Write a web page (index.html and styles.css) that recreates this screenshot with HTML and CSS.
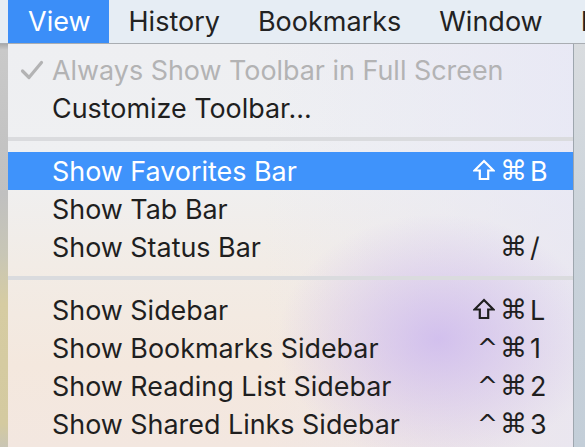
FILE: index.html
```html
<!DOCTYPE html>
<html lang="en">
<head>
    <meta charset="utf-8" />
    <meta name="viewport" content="width=device-width, initial-scale=1.0">
    <title>View menu</title>
    <link rel="stylesheet" href="styles.css">
</head>
<body>
    <div class="menubar">
        <span class="bar-item active">View</span>
        <span class="bar-item">History</span>
        <span class="bar-item">Bookmarks</span>
        <span class="bar-item">Window</span>
        <span class="bar-item">Help</span>
    </div>
    <div class="desk">
        <div class="desk-left"></div>
        <div class="menu">
            <div class="item disabled">
                <span class="check">
                    <svg width="24" height="20" viewBox="0 0 24 20"><path d="M2.5 11 L9 17.5 L21.5 2.5" fill="none" stroke="currentColor" stroke-width="3.2" stroke-linecap="round" stroke-linejoin="round"/></svg>
                </span>
                <span class="label">Always Show Toolbar in Full Screen</span>
            </div>
            <div class="item">
                <span class="check"></span>
                <span class="label">Customize Toolbar…</span>
            </div>
            <div class="sep"></div>
            <div class="item selected">
                <span class="check"></span>
                <span class="label">Show Favorites Bar</span>
                <span class="mods">
                    <svg class="shift" width="22" height="22" viewBox="0 0 22 22"><path d="M11 2 L20.5 11.5 L15.2 11.5 L15.2 20 L6.8 20 L6.8 11.5 L1.5 11.5 Z" fill="none" stroke="currentColor" stroke-width="2.2" stroke-linejoin="miter"/></svg>
                    <span class="cmd">⌘</span>
                </span>
                <span class="key">B</span>
            </div>
            <div class="item">
                <span class="check"></span>
                <span class="label">Show Tab Bar</span>
            </div>
            <div class="item">
                <span class="check"></span>
                <span class="label">Show Status Bar</span>
                <span class="mods"><span class="cmd">⌘</span></span>
                <span class="key">/</span>
            </div>
            <div class="sep"></div>
            <div class="item">
                <span class="check"></span>
                <span class="label">Show Sidebar</span>
                <span class="mods">
                    <svg class="shift" width="22" height="22" viewBox="0 0 22 22"><path d="M11 2 L20.5 11.5 L15.2 11.5 L15.2 20 L6.8 20 L6.8 11.5 L1.5 11.5 Z" fill="none" stroke="currentColor" stroke-width="2.2" stroke-linejoin="miter"/></svg>
                    <span class="cmd">⌘</span>
                </span>
                <span class="key">L</span>
            </div>
            <div class="item">
                <span class="check"></span>
                <span class="label">Show Bookmarks Sidebar</span>
                <span class="mods"><span class="ctrl">^</span><span class="cmd">⌘</span></span>
                <span class="key">1</span>
            </div>
            <div class="item">
                <span class="check"></span>
                <span class="label">Show Reading List Sidebar</span>
                <span class="mods"><span class="ctrl">^</span><span class="cmd">⌘</span></span>
                <span class="key">2</span>
            </div>
            <div class="item">
                <span class="check"></span>
                <span class="label">Show Shared Links Sidebar</span>
                <span class="mods"><span class="ctrl">^</span><span class="cmd">⌘</span></span>
                <span class="key">3</span>
            </div>
        </div>
        <div class="desk-right"></div>
    </div>
</body>
</html>
```

FILE: styles.css
```css
html, body {
    margin: 0;
    height: 100%;
    overflow: hidden;
}
body {
    font-family: Inter, "Liberation Sans", sans-serif;
    color: #1f1f1f;
    background: #e7edf3;
}
.menubar {
    display: flex;
    height: 43px;
    padding-left: 8px;
    background: #e6edf4;
    border-bottom: 1px solid #a9adb2;
    white-space: nowrap;
    overflow: hidden;
}
.bar-item {
    padding: 0 18px 0 20px;
    line-height: 43px;
    font-size: 27px;
    color: #222;
}
.active {
    background: #3b8ef8;
    color: #fff;
}
.desk {
    display: flex;
    height: 403px;
}
.desk-left {
    width: 8px;
    background: linear-gradient(180deg, #a9a9a9 0, #c9c9c9 6px, #c0c0c0 150px, #c8c6b6 210px, #d6cca2 260px, #d4caa0 380px, #c9c5b4 403px);
}
.desk-right {
    width: 11px;
    border-left: 1px solid #9ea6ae;
    background: linear-gradient(180deg, #d9dcdf 0, #c9d2da 200px, #c3ced8 403px);
}
.menu {
    flex: 1;
    padding-top: 7px;
    background:
        radial-gradient(ellipse 160px 125px at 430px 295px, rgba(205, 185, 238, 0.85), rgba(205, 185, 238, 0) 100%),
        linear-gradient(90deg, rgba(232, 232, 246, 0) 45%, rgba(230, 230, 246, 0.7) 100%),
        linear-gradient(180deg, #eeeff2 0, #eff0f2 120px, #f2ece6 220px, #f4e8de 320px, #f3e7e0 403px);
}
.item {
    display: flex;
    align-items: center;
    height: 38px;
    font-size: 26.9px;
    white-space: nowrap;
}
.check {
    width: 44px;
    display: flex;
    justify-content: flex-end;
    padding-right: 8px;
    box-sizing: border-box;
}
.check svg {
    display: block;
}
.label {
    flex: 1;
}
.mods {
    display: flex;
    align-items: center;
    gap: 5px;
    font-family: "DejaVu Sans", sans-serif;
}
.shift {
    display: block;
    margin-top: -2px;
}
.cmd {
    font-size: 27px;
    line-height: 38px;
    margin-right: 2px;
}
.ctrl {
    font-size: 25px;
    line-height: 38px;
    margin-right: -3px;
}
.key {
    width: 44px;
    padding-left: 1px;
    box-sizing: border-box;
}
.disabled {
    color: #b3b3b4;
}
.selected {
    background: #3f93fb;
    color: #fff;
}
.sep {
    height: 4px;
    margin: 10px 0 11px;
    background: #dadbde;
}
```
